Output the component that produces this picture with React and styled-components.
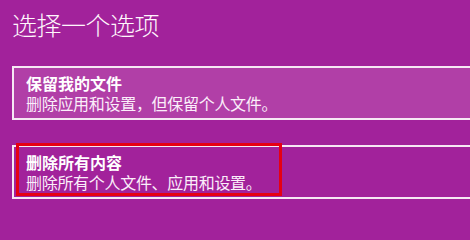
import React from "react";
import styled, { createGlobalStyle } from "styled-components";

const GlobalStyle = createGlobalStyle`
  html, body {
    margin: 0;
    padding: 0;
    background: #a2229b;
    overflow: hidden;
  }
  body {
    font-family: "Noto Sans CJK SC", "Noto Sans", sans-serif;
    color: #ffffff;
  }
`;

const Page = styled.div`
  height: 207px;
  padding: 6px 0 0 12px;
  box-sizing: border-box;
  overflow: hidden;
`;

const Heading = styled.h1`
  margin: 0 0 24px 0;
  font-size: 25px;
  font-weight: 300;
  line-height: 36px;
  letter-spacing: -0.5px;
  color: #fff6fc;
`;

const Options = styled.div`
  display: flex;
  flex-direction: column;
  gap: 25px;
`;

/* the option tiles run on past the right edge of the window */
const Option = styled.div`
  position: relative;
  height: 54px;
  box-sizing: border-box;
  border: 2px solid #f6e8f4;
  border-right: none;
  padding: 5px 12px;
  background: ${(p) => (p.$active ? "#b13fa7" : "transparent")};
`;

const OptionTitle = styled.div`
  font-size: 16px;
  font-weight: 700;
  line-height: 20px;
  color: #ffffff;
`;

const OptionText = styled.div`
  font-size: 16px;
  font-weight: 400;
  line-height: 20px;
  letter-spacing: -0.3px;
  color: #fbeefa;
`;

const Highlight = styled.div`
  position: absolute;
  left: 2px;
  top: -4px;
  width: 266px;
  height: 53px;
  box-sizing: border-box;
  border: 3px solid #e60012;
  pointer-events: none;
`;

const options = [
  {
    title: "保留我的文件",
    text: "删除应用和设置，但保留个人文件。",
    active: true,
  },
  {
    title: "删除所有内容",
    text: "删除所有个人文件、应用和设置。",
    marked: true,
  },
];

export default function App() {
  return (
    <>
      <GlobalStyle />
      <Page>
        <Heading>选择一个选项</Heading>
        <Options>
          {options.map((o) => (
            <Option key={o.title} $active={o.active}>
              {o.marked && <Highlight />}
              <OptionTitle>{o.title}</OptionTitle>
              <OptionText>{o.text}</OptionText>
            </Option>
          ))}
        </Options>
      </Page>
    </>
  );
}
